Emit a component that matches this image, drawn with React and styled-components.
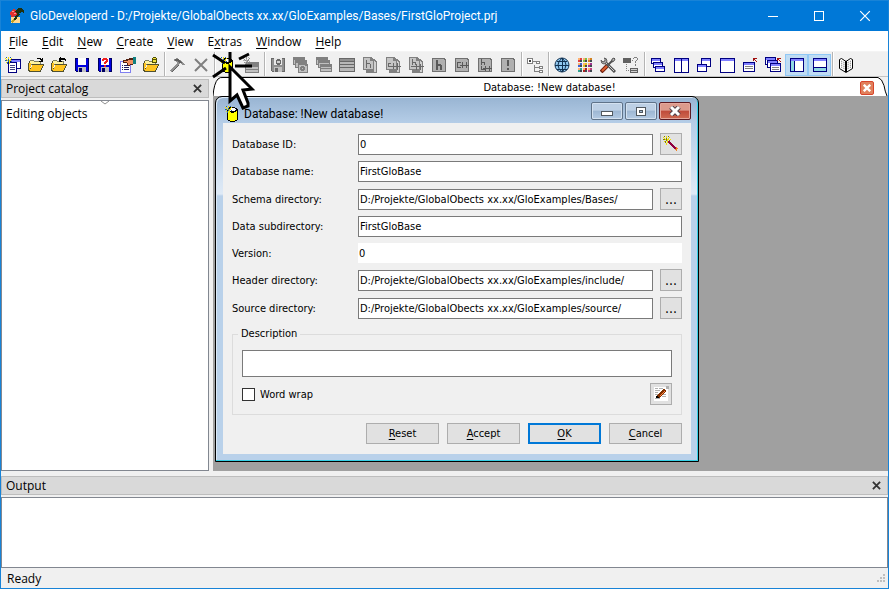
import React, { useState } from "react";
import styled, { createGlobalStyle } from "styled-components";

const GlobalStyle = createGlobalStyle`
  * {
    box-sizing: border-box;
  }
  body {
    margin: 0;
    font-family: "Open Sans", "Noto Sans", sans-serif;
    font-size: 12px;
    color: #000;
  }
  button, input, textarea {
    font: inherit;
    color: inherit;
    margin: 0;
    padding: 0;
    border-radius: 0;
    outline: none;
  }
  svg {
    display: block;
    flex: none;
  }
  u {
    text-underline-offset: 2px;
  }
`;

/* ---------- main window ---------- */

const Window = styled.div`
  position: relative;
  display: flex;
  flex-direction: column;
  height: 100vh;
  border: 1px solid #1883d7;
  background: #f0f0f0;
  overflow: hidden;
`;

const TitleBar = styled.header`
  display: flex;
  align-items: center;
  height: 30px;
  flex: none;
  padding-left: 8px;
  gap: 5px;
  background: #0078d7;
  color: #fff;
`;

const Title = styled.h1`
  flex: 1;
  margin: 0;
  font: 12px Roboto, sans-serif;
  white-space: nowrap;
`;

const CaptionButtons = styled.div`
  display: flex;
`;

const CaptionButton = styled.button`
  display: flex;
  align-items: center;
  justify-content: center;
  width: 46px;
  height: 30px;
  border: 0;
  background: none;
`;

const MenuBar = styled.nav`
  display: flex;
  flex: none;
  height: 21px;
  padding-left: 1px;
  background: #fff;
  border-bottom: 1px solid #f4f4f4;
`;

const MenuItem = styled.button`
  padding: 0 7px;
  border: 0;
  background: none;
  line-height: 21px;
`;

const ToolBar = styled.div`
  display: flex;
  flex: none;
  align-items: flex-end;
  height: 25px;
  padding-left: 1px;
  border-bottom: 1px solid #c4c4c4;
`;

const ToolButton = styled.button`
  width: 23px;
  height: 22px;
  padding: 0 4px 0 3px;
  border: 0;
  background: ${p => (p.$pressed ? "#bfdcf3" : "none")};
  box-shadow: ${p => (p.$pressed ? "inset 0 0 0 1px #90c8f6" : "none")};
`;

const Separator = styled.span`
  width: 2px;
  height: 24px;
  margin: 0 1px;
  border-left: 1px solid #b4b4b4;
  border-right: 1px solid #fff;
`;

const Middle = styled.main`
  display: flex;
  flex: 1;
  gap: 4px;
  min-height: 0;
`;

const Dock = styled.section`
  display: flex;
  flex-direction: column;
  gap: 2px;
  padding-top: ${p => (p.$bottom ? "5px" : "2px")};
  flex: none;
  width: ${p => (p.$bottom ? "auto" : "208px")};
  height: ${p => (p.$bottom ? "97px" : "auto")};
`;

const DockTitle = styled.div`
  display: flex;
  align-items: center;
  justify-content: space-between;
  flex: none;
  height: 19px;
  padding: 0 6px 0 4px;
  border: 1px solid #bdbdbd;
  background: #d9d9d9;
`;

const PlainButton = styled.button`
  border: 0;
  background: none;
`;

const DockBody = styled.div`
  flex: 1;
  border: 1px solid #828790;
  background: #fff;
  padding: 0 4px;
`;

const SortMark = styled.div`
  display: flex;
  justify-content: center;
  height: 4px;
`;

const TreeItem = styled.div`
  line-height: 17px;
`;

const Workspace = styled.section`
  flex: 1;
  display: flex;
  flex-direction: column;
  min-width: 0;
`;

const TabRow = styled.div`
  display: flex;
  flex: none;
  height: 19px;
`;

const Tab = styled.div`
  flex: 1;
  display: flex;
  align-items: center;
  padding: 1px 0 0 16px;
  border-top: 1px solid #000;
  background: #fff;
  font: 11px "DejaVu Sans Condensed", sans-serif;
`;

const TabText = styled.span`
  flex: 1;
  text-align: center;
`;

const TabClose = styled.button`
  display: flex;
  align-items: center;
  justify-content: center;
  width: 14px;
  height: 14px;
  border: 1px solid #d8452b;
  border-radius: 2px;
  background: #e0805c;
`;

const Desktop = styled.div`
  position: relative;
  flex: 1;
  background: #a0a0a0;
`;

const StatusBar = styled.footer`
  display: flex;
  align-items: center;
  justify-content: space-between;
  flex: none;
  height: 20px;
  padding: 0 2px 0 6px;
`;

/* ---------- dialog ---------- */

const Dialog = styled.form`
  position: absolute;
  left: 2px;
  top: 0;
  width: 484px;
  padding: 0 7px 7px;
  border: 1px solid #000;
  border-radius: 7px 7px 0 0;
  box-shadow: inset -1px -1px 0 #35d0e6, inset 1px 1px 0 #dbe9f7;
  background: linear-gradient(#98b4d2, #b5cde7 26px, #dfeaf6 97px, #b9d1ea 99px);
  font: 11px "DejaVu Sans Condensed", sans-serif;
`;

const DialogTitle = styled.div`
  display: flex;
  align-items: flex-start;
  gap: 2px;
  height: 26px;
  padding: 5px 0 0 2px;
`;

const DialogCaption = styled.div`
  flex: 1;
  display: flex;
  align-items: center;
  gap: 3px;
  padding-top: 3px;
`;

const DialogName = styled.h2`
  margin: 0;
  font: 12px/18px Roboto, sans-serif;
`;

const FrameButton = styled.button`
  display: flex;
  align-items: center;
  justify-content: center;
  width: 32px;
  height: 18px;
  border: 1px solid ${p => (p.$close ? "#5b1a22" : "#5f7389")};
  border-radius: 2px;
  box-shadow: inset 0 0 0 1px ${p => (p.$close ? "#e5a79c" : "#d3e1f0")};
  background: ${p =>
    p.$close
      ? "linear-gradient(#dc9a8c 45%, #bf4a3a 50%, #cf6a52)"
      : "linear-gradient(#bdd0e5 45%, #9db7d3 50%, #b4cbe4)"};
`;

const DialogBody = styled.div`
  padding: 10px 9px;
  background: #f0f0f0;
`;

const Fields = styled.div`
  display: grid;
  gap: 6px;
`;

const Field = styled.div`
  display: flex;
  align-items: center;
  gap: 7px;
`;

const Label = styled.label`
  width: 119px;
  flex: none;
`;

const TextInput = styled.input`
  flex: 1;
  min-width: 0;
  height: ${p => (p.$flat ? "20px" : "21px")};
  padding: 0 1px;
  border: ${p => (p.$flat ? "0" : "1px solid #7a7a7a")};
  background: #fff;
`;

const SmallButton = styled.button`
  display: flex;
  align-items: center;
  justify-content: center;
  width: 22px;
  height: 22px;
  border: 1px solid #adadad;
  background: #e1e1e1;
  font-size: 14px;
`;

const Group = styled.fieldset`
  margin: 8px 0;
  padding: 9px;
  border: 1px solid #dcdcdc;
  min-width: 0;
`;

const Legend = styled.legend`
  margin-left: -4px;
  padding: 0 3px;
  line-height: 14px;
`;

const Description = styled.textarea`
  display: block;
  width: 100%;
  height: 27px;
  border: 1px solid #7a7a7a;
  background: #fff;
  resize: none;
`;

const GroupFoot = styled.div`
  display: flex;
  align-items: center;
  justify-content: space-between;
  padding-top: 6px;
`;

const CheckLabel = styled.label`
  display: flex;
  align-items: center;
  gap: 5px;
`;

const CheckBox = styled.input`
  appearance: none;
  width: 13px;
  height: 13px;
  border: 1px solid #333;
  background: #fff;
  &:checked {
    box-shadow: inset 0 0 0 2px #fff;
    background: #333;
  }
`;

const Actions = styled.div`
  display: flex;
  justify-content: flex-end;
  gap: 8px;
`;

const ActionButton = styled.button`
  width: 73px;
  height: 21px;
  border: ${p => (p.$main ? "2px solid #0078d7" : "1px solid #adadad")};
  background: #e1e1e1;
`;

/* lies over the tool bar and the dialog, points at "new database" */
const Pointer = styled.svg`
  position: absolute;
  left: 210px;
  top: 49px;
  pointer-events: none;
`;

/* ---------- icons ---------- */

const Icon = ({ children, size = 16 }) => (
  <svg
    width={size}
    height={size}
    viewBox={`0 0 ${size} ${size}`}
    shapeRendering="crispEdges"
    aria-hidden="true"
  >
    {children}
  </svg>
);

const navy = "#000080";
const grey = "#808080";

// small framed window with a coloured caption
const Win = ({ x, y, w, h, c = navy, top = "#8080ff", fill = "#fff", t = 2 }) => (
  <g>
    <rect x={x} y={y} width={w} height={h} fill={c} />
    <rect x={x + 1} y={y + 1} width={w - 2} height={h - 2} fill={fill} />
    <rect x={x + 1} y={y + 1} width={w - 2} height={t} fill={top} />
  </g>
);

const Spark = ({ c = "#f0e000", d = "#2060a0" }) => (
  <g>
    <path fill={c} d="M3 0h1v2h-1zM0 1h1v1h1v1h-1v-1h-1zM6 1h1v1h-1v1h-1v-1h1zM2 3h4v1h-4zM1 5h1v1h-1zM4 4h1v3h-1z" />
    <path fill={d} d="M1 0h1v1h-1zM5 0h1v1h-1zM0 3h2v1h-2zM3 2h1v3h-1zM6 4h1v1h-1zM2 5h1v2h-1z" />
  </g>
);

const Folder = ({ children }) => (
  <Icon>
    <path fill="#808060" d="M1 4h1v-1h4v1h7v4h-12z" />
    <path fill="#fff4a0" d="M2 4h4v1h6v2h-10z" />
    <path fill="#505030" d="M0 6h1v-2h1v7h2v-4h12v2h-1v2h-1v2h-1v2h-12v-1h-1z" />
    <path fill="#ffc420" d="M1 6h2v4h-1v3h-1zM4 8h11v1h-1v2h-1v2h-1v1h-10v-2h1v-2h1z" />
    {children}
  </Icon>
);

const Floppy = ({ c = "#0000e0", k = "#000060", children, label = "#fff" }) => (
  <Icon>
    <path fill={k} d="M1 1h14v14h-13l-1-1z" />
    <path fill={c} d="M2 2h12v12h-12z" />
    <path fill={label} d="M4 1h8v7h-8z" />
    <path fill="#c0c0c0" d="M4 10h8v5h-8z" />
    <path fill={k} d="M5 11h3v4h-3z" />
    {children}
  </Icon>
);

// two sheets, one behind the other
const Page = ({ children }) => (
  <Icon>
    <path fill={grey} d="M4 2h8l3 3v11h-11z" />
    <path fill="#d0d0d0" d="M12 4l2 2v9h-2z" />
    <path fill={grey} d="M1 0h8l3 3v10h-11z" />
    <path fill="#c4c4c4" d="M2 1h6v3h3v8h-9z" />
    {children}
  </Icon>
);

// page with a bigger dark face, used by the "generate" buttons
const Block = ({ children }) => (
  <Icon>
    <path fill="#707070" d="M1 1h12l2 2v12h-14z" />
    <path fill="#b0b0b0" d="M2 2h11v1h1v11h-12z" />
    {children}
  </Icon>
);

const icons = {
  app: (
    <Icon>
      <path fill="#ffd890" d="M2 9h9v6h-9z" />
      <path fill="#e03030" d="M1 5l3-4 3 1 2 3-2 3-5 1z" />
      <path fill="#ff9090" d="M3 3h2v1h-2zM5 5h2v1h-2z" />
      <path fill="#203010" d="M6 3l3-3h3l3 3v3l-2-2-3 1-2 1zM9 5l2 1-6 8-2-1z" />
      <path fill="#c0a020" d="M4 11l2 1-2 3-2-1z" />
    </Icon>
  ),
  newProject: (
    <Icon>
      <Win x={5} y={2} w={11} h={10} />
      <Win x={3} y={5} w={9} h={11} top="#fff" />
      <path fill="#404080" d="M5 8h5v1h-5zM5 10h5v1h-5zM5 12h5v1h-5z" />
      <Spark />
    </Icon>
  ),
  open: (
    <Folder>
      <path fill="#000" d="M9 1h4v1h1v-1h1v4h-4v-1h2v-1h-1v-1h-3z" />
    </Folder>
  ),
  reopen: (
    <Folder>
      <path fill="#000" d="M9 0h1v1h4v1h1v2h-1v-1h-4v1h1v1h-3v-4h1z" />
    </Folder>
  ),
  save: <Floppy />,
  saveAs: (
    <Floppy>
      <path fill="#f02020" d="M5 2h1v-1h4v1h1v3h-1v1h-1v1h-2v-2h1v-1h1v-1h-2v1h-2zM7 8h2v2h-2z" />
    </Floppy>
  ),
  props: (
    <Icon>
      <Win x={0} y={4} w={11} h={12} top="#fff" c="#8080f0" />
      <path fill="#202060" d="M2 8h1v1h-1zM4 8h5v1h-5zM2 10h1v1h-1zM4 10h5v1h-5zM2 12h1v1h-1zM4 12h5v1h-5z" />
      <path fill="#502010" d="M3 3h3v-1h3v-1h4v7h-3v1h-2v-1h-1v-2h-4z" />
      <path fill="#f09060" d="M4 4h4v-1h5v4h-3v1h-2v-2h-1v-1h-3z" />
      <path fill="#108080" d="M13 0h3v7h-3z" />
    </Icon>
  ),
  lockFolder: (
    <Folder>
      <path fill="#505000" d="M9 1h1v-1h3v1h1v5h-5z" />
      <path fill="#f0e040" d="M10 3h3v2h-3zM10 1h3v1h-3z" />
    </Folder>
  ),
  hammer: (
    <Icon>
      <path fill="#909090" d="M3 3l4-2 5 3 3 4h-2l-3-2-1 1-7 8-2-1 7-8-2-2z" />
      <path fill="#606060" d="M5 2h3l4 3v1h-2l-3-2h-2zM8 8h1l-6 7h-1z" />
    </Icon>
  ),
  remove: (
    <Icon>
      <path stroke="#808080" strokeWidth="2" fill="none" shapeRendering="auto" d="M2 2l12 12M14 2l-12 12" />
    </Icon>
  ),
  database: (
    <Icon>
      <path fill="#000" d="M4 1h6v1h2v1h1v11h-1v1h-2v1h-5v-1h-2v-1h-1v-11h1v-1h1z" />
      <path fill="#ff0" d="M3 5h1v1h2v1h3v-1h2v-1h1v9h-2v1h-5v-1h-2z" />
      <path fill="#fff" d="M5 2h5v1h1v1h-1v1h-5v-1h-1v-1h1z" />
      <Spark />
    </Icon>
  ),
  table: (
    <Icon>
      <Win x={2} y={5} w={14} h={11} c={grey} top="#808080" fill="#c0c0c0" t={3} />
      <path fill={grey} d="M3 9h12v1h-12zM3 12h12v1h-12z" />
      <Spark c="#909090" d="#b0b0b0" />
    </Icon>
  ),
  saveGrey: (
    <Floppy c="#909090" k="#686868" label="#e8e8e8">
      <path fill="#686868" d="M6 3h1v-1h3v1h1v4h-1v1h-3v-1h-1z" />
      <path fill="#d0d0d0" d="M7 4h3v2h-3z" />
    </Floppy>
  ),
  tables: (
    <Icon>
      <Win x={0} y={0} w={12} h={8} c={grey} top="#808080" fill="#c0c0c0" />
      <Win x={2} y={3} w={12} h={8} c={grey} top="#808080" fill="#c0c0c0" />
      <path fill={grey} d="M5 6h8l2 2v8h-10z" />
      <path fill="#c0c0c0" d="M6 8h6v1h2v6h-8z" />
      <path fill={grey} d="M8 9h3v1h1v3h-1v1h-3v-1h-1v-3h1z" />
      <path fill="#c0c0c0" d="M9 11h1v1h-1z" />
    </Icon>
  ),
  stack: (
    <Icon>
      <Win x={0} y={0} w={12} h={8} c={grey} top="#808080" fill="#c0c0c0" />
      <Win x={2} y={3} w={12} h={8} c={grey} top="#808080" fill="#c0c0c0" />
      <Win x={4} y={7} w={12} h={8} c={grey} top="#808080" fill="#c0c0c0" />
      <path fill={grey} d="M4 11h12v1h-12z" />
    </Icon>
  ),
  list: (
    <Icon>
      <path fill="#686868" d="M0 1h16v14h-16z" />
      <path fill="#b8b8b8" d="M1 5h14v2h-14zM1 8h14v2h-14zM1 11h14v3h-14z" />
      <path fill="#909090" d="M1 2h14v2h-14z" />
    </Icon>
  ),
  header: (
    <Page>
      <path fill="#686868" d="M4 3h1v3h3v1h1v4h-1v-4h-3v4h-1z" />
    </Page>
  ),
  source: (
    <Page>
      <path fill="#686868" d="M3 6h3v1h-2v2h12v1h-13zM8 6h1v6h-1zM12 6h1v7h-1z" />
    </Page>
  ),
  sources: (
    <Page>
      <path fill="#686868" d="M4 2h1v3h3v3h-1v-2h-2v2h-1zM3 9h13v1h-13zM8 7h1v6h-1zM12 7h1v6h-1z" />
    </Page>
  ),
  genHeader: (
    <Block>
      <path fill="#585858" d="M5 3h2v4h3v1h1v5h-2v-4h-2v4h-2z" />
    </Block>
  ),
  genSource: (
    <Block>
      <path fill="#585858" d="M3 5h4v1h-3v4h3v1h-4zM6 8h9v1h-9zM8 5h1v6h-1zM12 5h1v6h-1z" />
    </Block>
  ),
  genAll: (
    <Block>
      <path fill="#585858" d="M4 2h1v3h3v3h-1v-2h-2v2h-1zM4 9h1v3h3v1h-4zM6 11h9v1h-9zM8 9h1v5h-1zM12 9h1v5h-1z" />
    </Block>
  ),
  check: (
    <Block>
      <path fill="#585858" d="M7 3h2v6h-2zM7 11h2v2h-2z" />
    </Block>
  ),
  tree: (
    <Icon>
      <path fill={grey} d="M0 1h6v6h-6zM9 4h4v3h-4zM7 8h1v7h-1zM12 9h4v3h-4zM12 13h4v3h-4zM6 4h3v1h-3zM8 10h4v1h-4zM8 14h4v1h-4z" />
      <path fill="#fff" d="M1 2h4v4h-4zM10 5h2v1h-2zM13 10h2v1h-2zM13 14h2v1h-2z" />
      <path fill="#404040" d="M2 3h2v2h-2z" />
    </Icon>
  ),
  globe: (
    <Icon>
      <circle cx="8" cy="8" r="7" fill="#90c8f0" stroke="#103050" shapeRendering="auto" />
      <path shapeRendering="auto" fill="none" stroke="#103050" d="M1 8.500h14M8.500 1v14M3 4.500h10M3 12.500h10M8 1q-8 7 0 14M8 1q8 7 0 14" />
    </Icon>
  ),
  palette: (
    <Icon>
      {["#e04040", "#80c040", "#d08020", "#4060d0", "#e0c020", "#a03090", "#30a090", "#b02020", "#c04080"].map((c, i) => (
        <g key={c}>
          <rect x={1 + (i % 3) * 5} y={1 + Math.floor(i / 3) * 5} width="4" height="4" fill={c} />
          <rect x={1 + (i % 3) * 5} y={1 + Math.floor(i / 3) * 5} width="2" height="2" fill="#ffb070" />
          <rect x={3 + (i % 3) * 5} y={3 + Math.floor(i / 3) * 5} width="2" height="2" fill="#404850" />
        </g>
      ))}
    </Icon>
  ),
  tools: (
    <Icon>
      <g shapeRendering="auto">
        <path stroke="#505050" strokeWidth="3" d="M4 4l11 11" />
        <path stroke="#d0d0d0" strokeWidth="1" d="M4 4l10 10" />
        <path fill="#b0b0b0" stroke="#606060" d="M1 3l2 2 2-1 0-2-1-1q3 0 3 3l-1 2-2 1q-3 0-3-4z" />
        <path stroke="#702010" strokeWidth="4" d="M1 15l6-6" />
        <path stroke="#e06030" strokeWidth="2" d="M2 14l5-5" />
        <path stroke="#505050" strokeWidth="2" d="M7 9l6-6" />
        <path fill="#c0c0c0" stroke="#505050" d="M12 2l2-1 1 1-1 2-2 1z" />
      </g>
    </Icon>
  ),
  query: (
    <Icon>
      <path fill="#606060" d="M0 1h8v5h-8zM7 11h8v5h-8z" />
      <path fill="#d0d0d0" d="M8 12h6v1h-6zM8 14h6v1h-6z" />
      <path fill={grey} d="M3 7h1v1h-1zM3 9h1v1h-1zM3 11h1v1h-1zM3 13h1v1h-1zM5 13h1v1h-1zM9 3h1v1h-1zM10 1h1v-1h3v1h1v2h-1v1h-1v2h-1v-2h1v-1h1v-2h-3v1h-1zM12 7h1v2h-1z" />
    </Icon>
  ),
  cascade: (
    <Icon>
      <Win x={1} y={1} w={10} h={6} />
      <Win x={3} y={5} w={10} h={6} />
      <Win x={5} y={9} w={10} h={6} />
    </Icon>
  ),
  tile: (
    <Icon>
      <Win x={1} y={1} w={8} h={15} />
      <Win x={8} y={1} w={8} h={15} />
    </Icon>
  ),
  overlap: (
    <Icon>
      <Win x={5} y={1} w={10} h={9} />
      <Win x={1} y={7} w={10} h={8} />
    </Icon>
  ),
  maximize: (
    <Icon>
      <Win x={1} y={1} w={15} h={15} />
    </Icon>
  ),
  restore: (
    <Icon>
      <Win x={1} y={5} w={12} h={10} />
      <path fill={grey} d="M3 9h8v1h-8zM3 11h8v1h-8z" />
      <path fill="#a01010" d="M11 1h4v1h-2v1h1v1h1v1h-1v-1h-1v-1h-1v1h-1z" />
    </Icon>
  ),
  restoreAll: (
    <Icon>
      <Win x={0} y={0} w={11} h={8} />
      <Win x={2} y={3} w={11} h={8} />
      <Win x={5} y={6} w={11} h={9} />
      <path fill={grey} d="M7 10h7v1h-7zM7 12h7v1h-7z" />
      <path fill="#a01010" d="M12 1h4v1h-2v1h1v1h1v1h-1v-1h-1v-1h-1v1h-1z" />
    </Icon>
  ),
  leftDock: (
    <Icon>
      <Win x={2} y={1} w={14} h={14} />
      <path fill="#90d8e0" d="M3 4h3v10h-3z" />
      <path fill={navy} d="M6 4h1v10h-1z" />
    </Icon>
  ),
  bottomDock: (
    <Icon>
      <Win x={2} y={1} w={14} h={14} />
      <path fill="#90d8e0" d="M3 11h12v3h-12z" />
      <path fill={navy} d="M3 10h12v1h-12z" />
    </Icon>
  ),
  book: (
    <Icon>
      <g shapeRendering="auto">
        <path fill="#fff" stroke="#000" d="M1.500 2.500l2-1 4.500 3 4.500-3 2 1v9l-6.500 4-6.500-4z" />
        <path stroke="#000" strokeWidth="2" d="M8 4v11" />
        <path stroke="#707070" strokeDasharray="1 1" fill="none" d="M3 4l4 2M3 6l4 2M3 8l4 2M3 10l4 2M13 4l-4 2M13 6l-4 2M13 8l-4 2M13 10l-4 2" />
      </g>
    </Icon>
  ),
  wand: (
    <Icon>
      <Spark d="#808000" />
      <path fill="#f0e000" d="M7 3h1v1h-1zM3 7h1v2h-1z" />
      <path fill="#900040" d="M5 5h2v1h1v1h1v1h1v1h1v1h1v1h1v2h-2v-1h-1v-1h-1v-1h-1v-1h-1v-1h-1v-1h-1z" />
      <path fill="#f08020" d="M13 11h1v1h1v1h-1v2h-1v-1h-1v-1h1z" />
    </Icon>
  ),
  edit: (
    <Icon>
      <path fill="#fff" d="M1 1h14v14h-14z" />
      <path fill="#b0b0b0" d="M2 2h3v1h-3zM6 2h4v1h-4zM2 4h5v1h-5zM2 6h3v1h-3zM2 8h3v1h-3zM9 10h4v1h-4zM9 8h4v1h-4zM2 12h5v1h-5zM13 0h3v3h-3z" />
      <path fill="#803000" d="M9 3h3v1h1v2h-1v1h-1v1h-1v1h-1v1h-1v1h-1v1h-3v-3h1v-1h1v-1h1v-1h1v-1h1v-1h1z" />
      <path fill="#ff8040" d="M11 5h1v1h-1v1h-1v1h-1v1h-1v1h-1v-1h1v-1h1v-1h1v-1h1z" />
      <path fill="#000" d="M3 10h2v1h1v1h-3z" />
    </Icon>
  ),
};

const Cross = ({ color, size = 9, width = 2 }) => (
  <svg width={size} height={size} viewBox="0 0 10 10" aria-hidden="true">
    <path d="M1 1l8 8M9 1l-8 8" stroke={color} strokeWidth={width} />
  </svg>
);

/* ---------- content ---------- */

const menus = [
  ["", "F", "ile"],
  ["", "E", "dit"],
  ["", "N", "ew"],
  ["", "C", "reate"],
  ["", "V", "iew"],
  ["E", "x", "tras"],
  ["", "W", "indow"],
  ["", "H", "elp"],
];

const toolGroups = [
  ["newProject", "open", "reopen", "save", "saveAs", "props", "lockFolder"],
  ["hammer", "remove"],
  ["database", "table"],
  ["saveGrey", "tables", "stack", "list", "header", "source", "sources", "genHeader", "genSource", "genAll", "check"],
  ["tree"],
  ["globe", "palette", "tools", "query"],
  ["cascade", "tile", "overlap", "maximize", "restore", "restoreAll", "leftDock", "bottomDock"],
  ["book"],
];

const fields = [
  { id: "dbId", label: "Database ID:", value: "0", button: "wand" },
  { id: "dbName", label: "Database name:", value: "FirstGloBase" },
  { id: "schema", label: "Schema directory:", value: "D:/Projekte/GlobalObects xx.xx/GloExamples/Bases/", button: "dots" },
  { id: "data", label: "Data subdirectory:", value: "FirstGloBase" },
  { id: "version", label: "Version:", value: "0", flat: true },
  { id: "header", label: "Header directory:", value: "D:/Projekte/GlobalObects xx.xx/GloExamples/include/", button: "dots" },
  { id: "source", label: "Source directory:", value: "D:/Projekte/GlobalObects xx.xx/GloExamples/source/", button: "dots" },
];

const DatabaseDialog = () => {
  const [wrap, setWrap] = useState(false);

  return (
    <Dialog onSubmit={e => e.preventDefault()}>
      <DialogTitle>
        <DialogCaption>
          {icons.database}
          <DialogName>Database: !New database!</DialogName>
        </DialogCaption>
        <FrameButton type="button" aria-label="Minimize">
          <Icon size={12}>
            <path fill="#505860" d="M0 6h12v5h-12z" />
            <path fill="#fff" d="M1 7h10v3h-10z" />
          </Icon>
        </FrameButton>
        <FrameButton type="button" aria-label="Maximize">
          <Icon size={12}>
            <path fill="#505860" d="M1 2h10v9h-10z" />
            <path fill="#fff" d="M2 3h8v7h-8z" />
            <path fill="#505860" d="M4 5h4v3h-4z" />
            <path fill="#a0b8d0" d="M5 6h2v1h-2z" />
          </Icon>
        </FrameButton>
        <FrameButton type="button" $close aria-label="Close dialog">
          <svg width="12" height="10" viewBox="0 0 12 10" aria-hidden="true">
            <path d="M2 1l8 8M10 1l-8 8" stroke="#504048" strokeWidth="5" />
            <path d="M2 1l8 8M10 1l-8 8" stroke="#fff" strokeWidth="3" />
          </svg>
        </FrameButton>
      </DialogTitle>
      <DialogBody>
        <Fields>
          {fields.map(f => (
            <Field key={f.id}>
              <Label htmlFor={f.id}>{f.label}</Label>
              <TextInput id={f.id} defaultValue={f.value} $flat={f.flat} readOnly={f.flat} />
              {f.button && (
                <SmallButton type="button" aria-label={"Choose " + f.label}>
                  {f.button === "wand" ? icons.wand : "..."}
                </SmallButton>
              )}
            </Field>
          ))}
        </Fields>
        <Group>
          <Legend>Description</Legend>
          <Description aria-label="Description" />
          <GroupFoot>
            <CheckLabel>
              <CheckBox type="checkbox" checked={wrap} onChange={e => setWrap(e.target.checked)} />
              Word wrap
            </CheckLabel>
            <SmallButton type="button" aria-label="Edit description">
              {icons.edit}
            </SmallButton>
          </GroupFoot>
        </Group>
        <Actions>
          <ActionButton type="reset"><u>R</u>eset</ActionButton>
          <ActionButton type="button"><u>A</u>ccept</ActionButton>
          <ActionButton type="submit" $main><u>O</u>K</ActionButton>
          <ActionButton type="button"><u>C</u>ancel</ActionButton>
        </Actions>
      </DialogBody>
    </Dialog>
  );
};

const App = () => (
  <>
    <GlobalStyle />
    <Window>
      <TitleBar>
        {icons.app}
        <Title>GloDeveloperd - D:/Projekte/GlobalObects xx.xx/GloExamples/Bases/FirstGloProject.prj</Title>
        <CaptionButtons>
          <CaptionButton aria-label="Minimize window">
            <Icon size={10}><path fill="#fff" d="M0 5h10v1h-10z" /></Icon>
          </CaptionButton>
          <CaptionButton aria-label="Maximize window">
            <Icon size={10}><path fill="#fff" fillRule="evenodd" d="M0 0h10v10h-10zM1 1v8h8v-8z" /></Icon>
          </CaptionButton>
          <CaptionButton aria-label="Close window">
            <Cross color="#fff" size={12} width={1} />
          </CaptionButton>
        </CaptionButtons>
      </TitleBar>
      <MenuBar>
        {menus.map(([before, key, after]) => (
          <MenuItem key={key}>{before}<u>{key}</u>{after}</MenuItem>
        ))}
      </MenuBar>
      <ToolBar>
        {toolGroups.map((group, i) => (
          <React.Fragment key={group[0]}>
            {i > 0 && <Separator />}
            {group.map(name => (
              <ToolButton key={name} aria-label={name} $pressed={name.endsWith("Dock")}>
                {icons[name]}
              </ToolButton>
            ))}
          </React.Fragment>
        ))}
      </ToolBar>
      <Middle>
        <Dock>
          <DockTitle>
            Project catalog
            <PlainButton aria-label="Close project catalog"><Cross color="#333" /></PlainButton>
          </DockTitle>
          <DockBody>
            <SortMark>
              <svg width="8" height="4" viewBox="0 0 8 4" aria-hidden="true">
                <path d="M0 0l4 3 4-3" fill="none" stroke="#909090" />
              </svg>
            </SortMark>
            <TreeItem>Editing objects</TreeItem>
          </DockBody>
        </Dock>
        <Workspace>
          <TabRow>
            <svg width="10" height="19" viewBox="0 0 10 19" aria-hidden="true">
              <path d="M0 19q1-18 10-19v19z" fill="#fff" />
              <path d="M0 19q1-13 5-17q2-2 5-1.500" fill="none" stroke="#000" />
            </svg>
            <Tab>
              <TabText>Database: !New database!</TabText>
              <TabClose aria-label="Close tab"><Cross color="#fff" size={8} width={3} /></TabClose>
            </Tab>
            <svg width="14" height="19" viewBox="0 0 14 19" aria-hidden="true">
              <path d="M0 0h4q5 1 6 9q1 6 3 10h-13z" fill="#fff" />
              <path d="M0 .5h4q4 1 6 8q1 6 3 10.500" fill="none" stroke="#000" />
            </svg>
          </TabRow>
          <Desktop>
            <DatabaseDialog />
          </Desktop>
        </Workspace>
      </Middle>
      <Dock $bottom>
        <DockTitle>
          Output
          <PlainButton aria-label="Close output"><Cross color="#333" /></PlainButton>
        </DockTitle>
        <DockBody />
      </Dock>
      <StatusBar>
        Ready
        <Icon size={9}>
          <path fill="#bfbfbf" d="M6 0h2v2h-2zM3 3h2v2h-2zM6 3h2v2h-2zM0 6h2v2h-2zM3 6h2v2h-2zM6 6h2v2h-2z" />
        </Icon>
      </StatusBar>
      <Pointer width="48" height="62" viewBox="0 0 48 62" aria-hidden="true">
        <g stroke="#000" strokeWidth="3">
          <path d="M19 2v10M24 16h17M28 9l10-5M2 5l12 8M2 27l13-9" />
        </g>
        <path d="M19 17l22 22-9 1 5 13v3l-5 2-6-13-7 6z" fill="#fff" stroke="#000" strokeWidth="3" />
      </Pointer>
    </Window>
  </>
);

export default App;
